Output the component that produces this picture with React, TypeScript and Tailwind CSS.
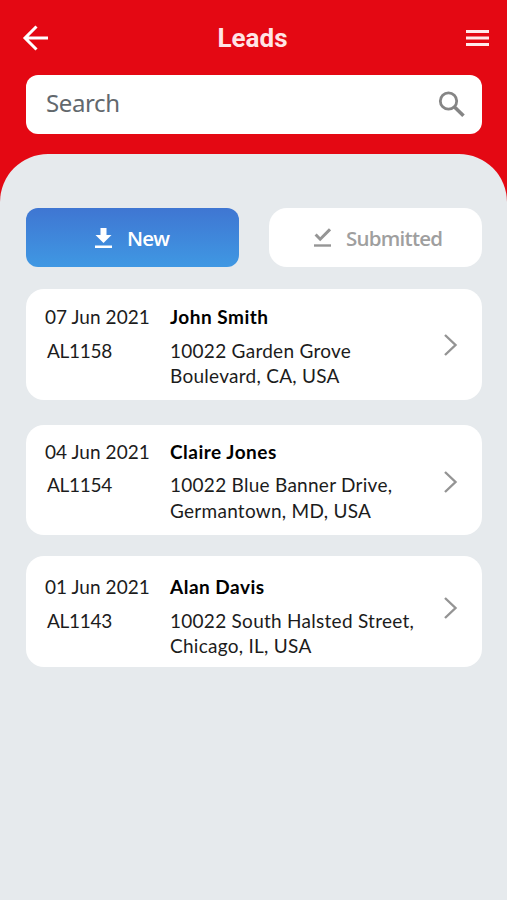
import { useState } from "react"

const leads = [
  {
    id: "AL1158",
    date: "07 Jun 2021",
    name: "John Smith",
    address: ["10022 Garden Grove", "Boulevard, CA, USA"],
    card: "mt-[22px] pt-[15px]",
    arrow: "mt-[29px]",
  },
  {
    id: "AL1154",
    date: "04 Jun 2021",
    name: "Claire Jones",
    address: ["10022 Blue Banner Drive,", "Germantown, MD, USA"],
    card: "mt-[25px] pt-[14px]",
    arrow: "mt-[31px]",
  },
  {
    id: "AL1143",
    date: "01 Jun 2021",
    name: "Alan Davis",
    address: ["10022 South Halsted Street,", "Chicago, IL, USA"],
    card: "mt-[21px] pt-[18px]",
    arrow: "mt-[22px]",
  },
]

function Header() {
  return (
    <header className="flex h-[75px] items-center justify-between pl-[22px] pr-[18px]">
      <button aria-label="Back">
        <svg width="27" height="26" viewBox="0 0 27 26" fill="none" stroke="#fff" strokeWidth="3">
          <path d="M14.5 1.5L3 13l11.5 11.5M3 13h23" />
        </svg>
      </button>
      <h1 className="mr-[10px] font-['Roboto',sans-serif] text-[26px] font-bold leading-[26px] text-[#ffe4e6]">
        Leads
      </h1>
      <button aria-label="Menu">
        <svg width="23" height="16" viewBox="0 0 23 16" fill="#ffe9ea">
          <path d="M0 0h23v3H0zM0 6.5h23v3H0zM0 13h23v3H0z" />
        </svg>
      </button>
    </header>
  )
}

export default function App() {
  const [search, setSearch] = useState("")
  const [tab, setTab] = useState("new")

  return (
    <div className="flex h-[900px] w-full flex-col bg-[#e40813]">
      <Header />
      {/* Search */}
      <div className="ml-[26px] mr-[25px] flex h-[58.5px] shrink-0 items-center justify-between rounded-xl bg-white pl-[20px] pr-[17px]">
        <input
          type="text"
          placeholder="Search"
          value={search}
          onChange={(e) => setSearch(e.target.value)}
          className="w-[300px] bg-transparent pb-[2px] font-['Noto_Sans',sans-serif] text-[24px] leading-[32px] tracking-[-0.4px] text-[#62686d] outline-none placeholder:text-[#62686d]"
        />
        <svg width="27" height="26" viewBox="0 0 27 26" fill="none" stroke="#858585" strokeWidth="2.8">
          <circle cx="10.5" cy="10" r="8.2" />
          <path d="M16.5 16l9 8.7" strokeWidth="3.6" />
        </svg>
      </div>

      <main className="mt-[20.5px] flex-1 rounded-t-[48px] bg-[#e6eaed] pl-[26px] pr-[25px] pt-[54px]">
        {/* Tabs */}
        <div className="flex justify-between font-['Open_Sans',sans-serif] text-[20.5px] font-semibold tracking-[-0.75px]">
          <button
            onClick={() => setTab("new")}
            aria-pressed={tab === "new"}
            className="flex h-[59px] w-[213px] items-center rounded-xl bg-linear-to-b from-[#3f76d2] to-[#3f98e3] pl-[69px] text-white"
          >
            <svg width="17" height="20" viewBox="0 0 17 20" fill="currentColor">
              <path d="M5.5 0h6v7h5L8.5 15 .5 7h5zM0 17.4h17V20H0z" />
            </svg>
            <span className="ml-[15px] pt-px">New</span>
          </button>
          <button
            onClick={() => setTab("submitted")}
            aria-pressed={tab === "submitted"}
            className="flex h-[59px] w-[213px] items-center rounded-[18px] bg-white pl-[45px] text-[#9f9f9f]"
          >
            <svg width="17" height="19" viewBox="0 0 17 19" fill="none" stroke="#959595">
              <path d="M1.6 6.5l4.6 4.7L16 1.3" strokeWidth="3" />
              <path d="M0 17.5h17" strokeWidth="2.4" />
            </svg>
            <span className="ml-[15px] pt-px">Submitted</span>
          </button>
        </div>

        {/* Lead cards */}
        {leads.map((lead) => (
          <article
            key={lead.id}
            className={`flex h-[110.5px] rounded-[18px] bg-white pl-[19px] font-['Lato',sans-serif] text-[19px] leading-[25.5px] text-[#1c1c1c] ${lead.card}`}
          >
            <div className="w-[125px] shrink-0 whitespace-nowrap">
              <p className="tracking-[0.06px]">{lead.date}</p>
              <p className="mt-[8px] pl-[2px] tracking-[-0.3px]">{lead.id}</p>
            </div>
            <div className="w-[274px] shrink-0 whitespace-nowrap">
              <h2 className="font-bold tracking-[0.5px] text-black">{lead.name}</h2>
              <p className="mt-[8px] tracking-[0.27px]">
                {lead.address[0]}
                <br />
                {lead.address[1]}
              </p>
            </div>
            <svg className={lead.arrow} width="14" height="24" viewBox="0 0 14 24" fill="none" stroke="#949494" strokeWidth="2.4">
              <path d="M1 2l10.5 10L1 22" />
            </svg>
          </article>
        ))}
      </main>
    </div>
  )
}
